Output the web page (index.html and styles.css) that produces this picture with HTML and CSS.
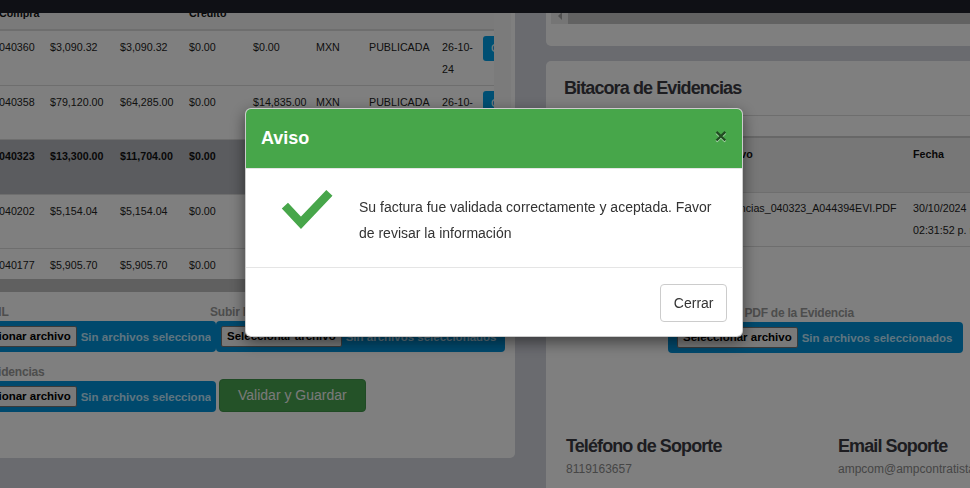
FILE: index.html
```html
<!DOCTYPE html>
<html lang="es">
<head>
<meta charset="utf-8">
<title>Facturas - Evidencias</title>
<link rel="stylesheet" href="styles.css">
</head>
<body>
<header class="topbar"></header>

<main class="page">
  <section class="panel panel-left">
    <div class="table-wrap">
      <div class="table-scroll">
        <div class="table-view">
          <table class="grid orders">
            <colgroup>
              <col class="w44"><col class="w51"><col class="w70"><col class="w69"><col class="w64">
              <col class="w63"><col class="w53"><col class="w73"><col class="w41"><col class="w60">
            </colgroup>
            <thead>
              <tr>
                <th>Serie</th><th>No. Compra</th><th>Subtotal</th><th>Total</th><th>Nota de Credito</th>
                <th>Retención</th><th>Moneda</th><th>Estatus</th><th>Fecha</th><th>Acciones</th>
              </tr>
            </thead>
            <tbody>
              <tr>
                <td>A</td><td>040360</td><td>$3,090.32</td><td>$3,090.32</td><td>$0.00</td>
                <td>$0.00</td><td>MXN</td><td>PUBLICADA</td><td>26-10-<wbr>24</td><td><span class="btn-row">Cargar</span></td>
              </tr>
              <tr>
                <td>A</td><td>040358</td><td>$79,120.00</td><td>$64,285.00</td><td>$0.00</td>
                <td>$14,835.00</td><td>MXN</td><td>PUBLICADA</td><td>26-10-<wbr>24</td><td><span class="btn-row">Cargar</span></td>
              </tr>
              <tr class="active">
                <td>A</td><td>040323</td><td>$13,300.00</td><td>$11,704.00</td><td>$0.00</td>
                <td>$1,596.00</td><td>MXN</td><td>PUBLICADA</td><td>26-10-<wbr>24</td><td><span class="btn-row">Cargar</span></td>
              </tr>
              <tr>
                <td>A</td><td>040202</td><td>$5,154.04</td><td>$5,154.04</td><td>$0.00</td>
                <td>$0.00</td><td>MXN</td><td>PUBLICADA</td><td>25-10-<wbr>24</td><td><span class="btn-row">Cargar</span></td>
              </tr>
              <tr>
                <td>A</td><td>040177</td><td>$5,905.70</td><td>$5,905.70</td><td>$0.00</td>
                <td>$0.00</td><td>MXN</td><td>PUBLICADA</td><td>24-10-<wbr>24</td><td><span class="btn-row">Cargar</span></td>
              </tr>
            </tbody>
          </table>
        </div>
        <div class="vtrack"></div>
      </div>
      <div class="hthumb"></div>
    </div>

    <form class="upload-grid">
      <div class="field">
        <label class="lbl">Subir XML</label>
        <div class="file"><span class="file-btn">Seleccionar archivo</span><span class="file-txt">Sin archivos seleccionados</span></div>
      </div>
      <div class="field">
        <label class="lbl lbl-out">Subir PDF</label>
        <div class="file"><span class="file-btn">Seleccionar archivo</span><span class="file-txt">Sin archivos seleccionados</span></div>
      </div>
      <div class="field">
        <label class="lbl">Subir Evidencias</label>
        <div class="file"><span class="file-btn">Seleccionar archivo</span><span class="file-txt">Sin archivos seleccionados</span></div>
      </div>
      <div class="field field-btn">
        <button type="button" class="btn-green">Validar y Guardar</button>
      </div>
    </form>
  </section>

  <div class="col-right">
    <section class="panel panel-top">
      <div class="top-area"></div>
      <div class="hscroll"><span class="arrow"><span class="tri"></span></span></div>
    </section>

    <section class="panel panel-log">
      <h3 class="title">Bitacora de Evidencias</h3>
      <hr class="rule">
      <table class="grid log">
        <colgroup><col class="w70"><col class="w75"><col class="w200"><col class="w90"></colgroup>
        <thead>
          <tr><th>Folio</th><th>Tipo de Documento</th><th>Archivo</th><th>Fecha</th></tr>
        </thead>
        <tbody>
          <tr><td>040323</td><td>Evidencia</td><td>Evidencias_040323_A044394EVI.PDF</td><td>30/10/2024 02:31:52 p. m.</td></tr>
        </tbody>
      </table>

      <div class="log-upload">
        <label class="lbl lbl-tight">Subir archivo PDF de la Evidencia</label>
        <div class="file file-wide"><span class="file-btn">Seleccionar archivo</span><span class="file-txt">Sin archivos seleccionados</span></div>
      </div>

      <div class="support">
        <div><h4 class="title">Teléfono de Soporte</h4><p class="support-val">8119163657</p></div>
        <div><h4 class="title">Email Soporte</h4><p class="support-val">ampcom@ampcontratistas.com</p></div>
      </div>
    </section>
  </div>
</main>

<div class="backdrop"></div>
<div class="modal">
  <div class="modal-dialog">
    <div class="modal-header">
      <h4 class="modal-title">Aviso</h4>
      <button type="button" class="close">×</button>
    </div>
    <div class="modal-body">
      <svg class="ok-icon" viewBox="0 0 54 42" width="54" height="42" aria-hidden="true">
        <polyline points="3.9,16.7 20,33.8 48.4,3.9" fill="none" stroke="#47a64a" stroke-width="8.5" stroke-linejoin="miter"/>
      </svg>
      <p class="msg">Su factura fue validada correctamente y aceptada. Favor de revisar la información</p>
    </div>
    <div class="modal-footer">
      <button type="button" class="btn-default">Cerrar</button>
    </div>
  </div>
</div>
</body>
</html>
```

FILE: styles.css
```css
* { box-sizing: border-box; }

html, body {
  margin: 0;
  height: 100%;
  overflow: hidden;
}

body {
  background: #d4d6df;
  font-family: "Liberation Sans", Arial, sans-serif;
  color: #222;
}

.topbar {
  position: fixed;
  top: 0;
  left: 0;
  right: 0;
  height: 13px;
  background: #1e202a;
  z-index: 10;
}

.page {
  display: flex;
  align-items: flex-start;
  gap: 31px;
  width: max-content;
  margin: -40px 0 0 -64px;
}

.panel {
  background: #fff;
  border-radius: 5px;
  flex: none;
}

/* ---------- left panel ---------- */
.panel-left {
  width: 579px;
  padding: 15px 4px 46px 15px;
}

.table-wrap { width: 560px; }

.table-scroll {
  display: flex;
  height: 304px;
}

.table-view {
  width: 543px;
  overflow: hidden;
}

.vtrack {
  width: 17px;
  background: #f7f7f7;
}

.hthumb {
  width: 543px;
  height: 13px;
  background: #c1c1c1;
}

.grid {
  table-layout: fixed;
  border-collapse: separate;
  border-spacing: 0;
  font-size: 10.7px;
  color: #222;
}

.grid th {
  text-align: left;
  vertical-align: top;
  font-weight: bold;
  padding: 5px 4px;
  line-height: 22px;
  color: #111;
}

.grid td {
  vertical-align: top;
  line-height: 22px;
  border-bottom: 1px solid #dcdcdc;
}

.orders { width: 588px; }
.orders th { background: #f4f4f4; border-bottom: 2px solid #dcdcdc; }
.orders td { padding: 5px 4px 4.5px; }
.orders tr.active td { background: #b6b8be; font-weight: bold; color: #111; }

.w41 { width: 41px; }
.w44 { width: 44px; }
.w51 { width: 51px; }
.w53 { width: 53px; }
.w60 { width: 60px; }
.w63 { width: 63px; }
.w64 { width: 64px; }
.w69 { width: 69px; }
.w70 { width: 70px; }
.w73 { width: 73px; }
.w75 { width: 75px; }
.w90 { width: 90px; }
.w200 { width: 200px; }

.btn-row {
  display: block;
  width: max-content;
  background: #009fe6;
  color: #fff;
  border-radius: 3px;
  padding: 0 8px;
  line-height: 25px;
  font-size: 11px;
}

.upload-grid {
  display: grid;
  grid-template-columns: 265px 289px;
  row-gap: 11px;
  align-items: end;
  margin-top: 11px;
}

.lbl {
  display: block;
  font-size: 12px;
  font-weight: bold;
  line-height: 18px;
  color: #9a9a9a;
  letter-spacing: -0.2px;
  white-space: nowrap;
}

.lbl-out { margin-left: -6px; }

.file {
  display: flex;
  align-items: center;
  gap: 4px;
  height: 31px;
  padding: 5px;
  background: #0093db;
  border-radius: 4px;
  overflow: hidden;
  white-space: nowrap;
}

.file-wide { padding-left: 9px; }

.file-btn {
  flex: none;
  height: 21px;
  padding: 0 5px;
  line-height: 19px;
  font-size: 11.5px;
  font-weight: bold;
  color: #000;
  background: #f2f2f2;
  border: 1px solid #767676;
  border-radius: 2px;
}

.file-txt {
  flex: 0 1 auto;
  min-width: 0;
  overflow: hidden;
  font-size: 11.5px;
  font-weight: bold;
  color: #bfe8ff;
}

.field-btn {
  display: flex;
  align-items: flex-end;
}

.btn-green {
  margin-left: 3px;
  height: 33px;
  padding: 6px 18px;
  font-family: "Liberation Sans", Arial, sans-serif;
  font-size: 14px;
  line-height: 19px;
  color: #f4f4f4;
  background: #48a450;
  border: 1px solid #41954a;
  border-radius: 4px;
}

/* ---------- right column ---------- */
.col-right {
  width: 460px;
  flex: none;
  display: flex;
  flex-direction: column;
  gap: 15px;
}

.panel-top { padding: 0 5px 22px; }
.top-area { height: 47px; }

.hscroll {
  display: flex;
  height: 17px;
  background: #c4c4c4;
}

.arrow {
  width: 17px;
  display: flex;
  align-items: center;
  justify-content: center;
  background: #eaeaea;
}

.tri {
  width: 0;
  height: 0;
  border-top: 4px solid transparent;
  border-bottom: 4px solid transparent;
  border-right: 4px solid #a3a3a3;
}

.panel-log { padding: 17px 0 40px 18px; }

.title {
  margin: 0;
  font-size: 18px;
  line-height: 20px;
  font-weight: bold;
  letter-spacing: -0.9px;
  color: #3a3a42;
}

.rule {
  height: 0;
  border: 0;
  border-top: 1px solid #dcdcdc;
  margin: 17px 0 20px;
}

.log {
  width: 435px;
  border-top: 2px solid #cfcfcf;
}
.log th { background: #eee; border-bottom: 1px solid #dcdcdc; }
.log td { padding: 4px 4px 5px; }

.log-upload {
  width: 295px;
  margin: 57px 0 0 104px;
}

.lbl-tight { letter-spacing: -0.25px; }

.support {
  display: grid;
  grid-template-columns: 272px 272px;
  margin-top: 83px;
  padding-left: 2px;
}

.support-val {
  margin: 5px 0 0;
  font-size: 12px;
  line-height: 17px;
  color: #8c8c8c;
  white-space: nowrap;
}

/* ---------- modal ---------- */
.backdrop {
  position: fixed;
  inset: 0;
  background: rgba(0, 0, 0, 0.5);
  z-index: 20;
}

.modal {
  position: fixed;
  inset: 0;
  z-index: 30;
}

.modal-dialog {
  width: 498px;
  margin: 108px 0 0 245px;
  background: #fff;
  border: 1px solid rgba(0, 0, 0, 0.2);
  border-radius: 6px;
  box-shadow: 0 5px 15px rgba(0, 0, 0, 0.5);
  overflow: hidden;
}

.modal-header {
  display: flex;
  align-items: center;
  justify-content: space-between;
  padding: 15px;
  background: #47a64a;
  border-bottom: 1px solid #e5e5e5;
}

.modal-title {
  margin: 0;
  font-size: 18px;
  line-height: 29px;
  font-weight: bold;
  color: #fff;
}

.close {
  padding: 0;
  margin-top: -6px;
  background: none;
  border: 0;
  font-family: "Liberation Sans", Arial, sans-serif;
  font-size: 21px;
  font-weight: bold;
  line-height: 1;
  color: #000;
  opacity: 0.55;
  text-shadow: 0 1px 0 #fff;
}

.modal-body {
  display: flex;
  align-items: flex-start;
  padding: 20px 20px 21px 35px;
}

.ok-icon { flex: none; display: block; }

.msg {
  margin: 5px 0 0 24px;
  font-size: 14px;
  line-height: 26px;
  color: #333;
}

.modal-footer {
  display: flex;
  justify-content: flex-end;
  padding: 16px 15px 14px;
  border-top: 1px solid #e5e5e5;
}

.btn-default {
  height: 38px;
  padding: 0 12.5px;
  font-family: "Liberation Sans", Arial, sans-serif;
  font-size: 14px;
  color: #333;
  background: #fff;
  border: 1px solid #ccc;
  border-radius: 4px;
}
```
